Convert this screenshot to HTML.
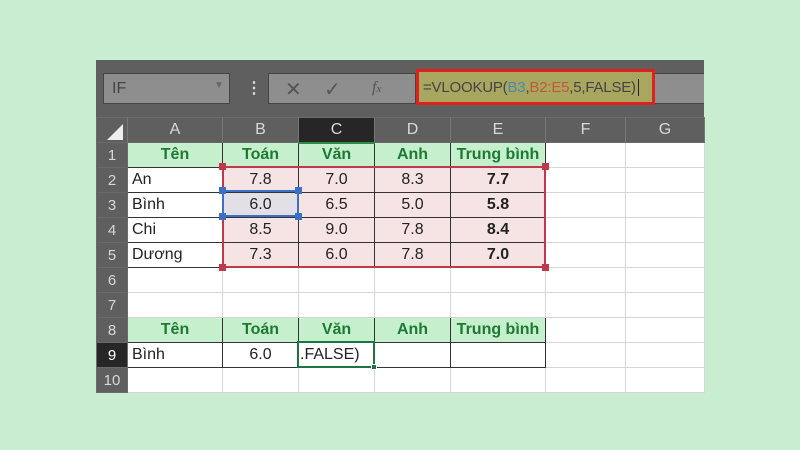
<!DOCTYPE html>
<html><head><meta charset="utf-8"><style>
*{margin:0;padding:0;box-sizing:border-box}
body{width:800px;height:450px;background:#c9edd0;position:relative;overflow:hidden;font-family:"Liberation Sans",sans-serif}
.tb{position:absolute;left:96px;top:60px;width:608px;height:57px;background:#5f5f5f}
.box{position:absolute;background:#8e8e8e;border:1px solid #444}
table{position:absolute;left:96px;top:117px;border-collapse:collapse;table-layout:fixed}
td{height:25px;border:1px solid #d6d6d6;background:#fff;font-size:16px;color:#222;text-align:center;padding:0;white-space:nowrap;overflow:hidden}
td.rh{background:#5f5f5f;color:#d8d8d8;border:1px solid #6a6a6a;font-size:15px}
tr.ch td{background:#5f5f5f;color:#d8d8d8;border:1px solid #6a6a6a;border-right:1px solid #777}
td.g{background:#c6efce;color:#1e7a32;font-weight:bold;border:1px solid #333}
td.d{border:1px solid #333}
td.p{background:#f6e3e4;border:1px solid #333}
td.l{text-align:left;padding-left:4px}
td.b{font-weight:bold}
.h{position:absolute;width:7px;height:7px}
</style></head><body>
<div class="tb">
 <div class="box" style="left:7px;top:13px;width:127px;height:31px"><span style="position:absolute;left:8px;top:6px;color:#444;font-size:16px">IF</span><span style="position:absolute;left:110px;top:6px;color:#666;font-size:10px">▼</span></div>
 <div style="position:absolute;left:150px;top:18px;color:#ddd;font-size:16px;font-weight:bold">⋮</div>
 <div class="box" style="left:172px;top:13px;width:235px;height:31px">
  <span style="position:absolute;left:16px;top:3px;color:#555;font-size:20px">✕</span>
  <span style="position:absolute;left:55px;top:3px;color:#555;font-size:20px">✓</span>
  <span style="position:absolute;left:103px;top:5px;color:#555;font-size:16px;font-style:italic;font-family:'Liberation Serif',serif">f<span style="font-size:11px">x</span></span>
 </div>
 <div class="box" style="left:319px;top:13px;width:289px;height:31px;border-right:none"></div>
 <div style="position:absolute;left:320px;top:9px;width:239px;height:36px;border:3px solid #e0201c;background:#a9a660;font-size:15px;letter-spacing:-0.2px;color:#444;padding:7px 0 0 4px;white-space:nowrap">=VLOOKUP(<span style="color:#4a8ab0">B3</span>,<span style="color:#c0593a">B2:E5</span>,5,FALSE)<span style="border-left:1px solid #222;margin-left:2px"></span></div>
</div>
<table>
<colgroup><col style="width:31px"><col style="width:95px"><col style="width:76px"><col style="width:76px"><col style="width:76px"><col style="width:95px"><col style="width:80px"><col style="width:79px"></colgroup>
<tr class="ch"><td style="font-size:0"><svg width="16" height="16" style="margin-top:4px;margin-left:6px"><polygon points="16,0 16,16 0,16" fill="#eee"/></svg></td><td>A</td><td>B</td><td style="background:#262626;border-bottom:2px solid #2e8b47">C</td><td>D</td><td>E</td><td>F</td><td>G</td></tr>
<tr><td class="rh">1</td><td class="g">Tên</td><td class="g">Toán</td><td class="g">Văn</td><td class="g">Anh</td><td class="g">Trung bình</td><td></td><td></td></tr>
<tr><td class="rh">2</td><td class="d l">An</td><td class="p">7.8</td><td class="p">7.0</td><td class="p">8.3</td><td class="p b">7.7</td><td></td><td></td></tr>
<tr><td class="rh">3</td><td class="d l">Bình</td><td class="p" style="background:#e3dfe6">6.0</td><td class="p">6.5</td><td class="p">5.0</td><td class="p b">5.8</td><td></td><td></td></tr>
<tr><td class="rh">4</td><td class="d l">Chi</td><td class="p">8.5</td><td class="p">9.0</td><td class="p">7.8</td><td class="p b">8.4</td><td></td><td></td></tr>
<tr><td class="rh">5</td><td class="d l">Dương</td><td class="p">7.3</td><td class="p">6.0</td><td class="p">7.8</td><td class="p b">7.0</td><td></td><td></td></tr>
<tr><td class="rh">6</td><td></td><td></td><td></td><td></td><td></td><td></td><td></td></tr>
<tr><td class="rh">7</td><td></td><td></td><td></td><td></td><td></td><td></td><td></td></tr>
<tr><td class="rh">8</td><td class="g">Tên</td><td class="g">Toán</td><td class="g">Văn</td><td class="g">Anh</td><td class="g">Trung bình</td><td></td><td></td></tr>
<tr><td class="rh" style="background:#262626;color:#fff">9</td><td class="d l">Bình</td><td class="d">6.0</td><td class="d l" style="padding-left:1px">.FALSE)</td><td class="d"></td><td class="d"></td><td></td><td></td></tr>
<tr><td class="rh">10</td><td></td><td></td><td></td><td></td><td></td><td></td><td></td></tr>
</table>
<div style="position:absolute;left:222px;top:166px;width:324px;height:102px;border:2px solid #c0394b"></div>
<div class="h" style="left:219px;top:163px;background:#c0394b"></div>
<div class="h" style="left:542px;top:163px;background:#c0394b"></div>
<div class="h" style="left:219px;top:264px;background:#c0394b"></div>
<div class="h" style="left:542px;top:264px;background:#c0394b"></div>
<div style="position:absolute;left:222px;top:190px;width:77px;height:27px;border:2px solid #3d6fc4"></div>
<div class="h" style="left:219px;top:187px;background:#3d6fc4"></div>
<div class="h" style="left:295px;top:187px;background:#3d6fc4"></div>
<div class="h" style="left:219px;top:213px;background:#3d6fc4"></div>
<div class="h" style="left:295px;top:213px;background:#3d6fc4"></div>
<div style="position:absolute;left:297px;top:341px;width:78px;height:27px;border:2px solid #217346"></div>
<div class="h" style="left:371px;top:364px;width:6px;height:6px;background:#217346;border:1px solid #fff"></div>
</body></html>
